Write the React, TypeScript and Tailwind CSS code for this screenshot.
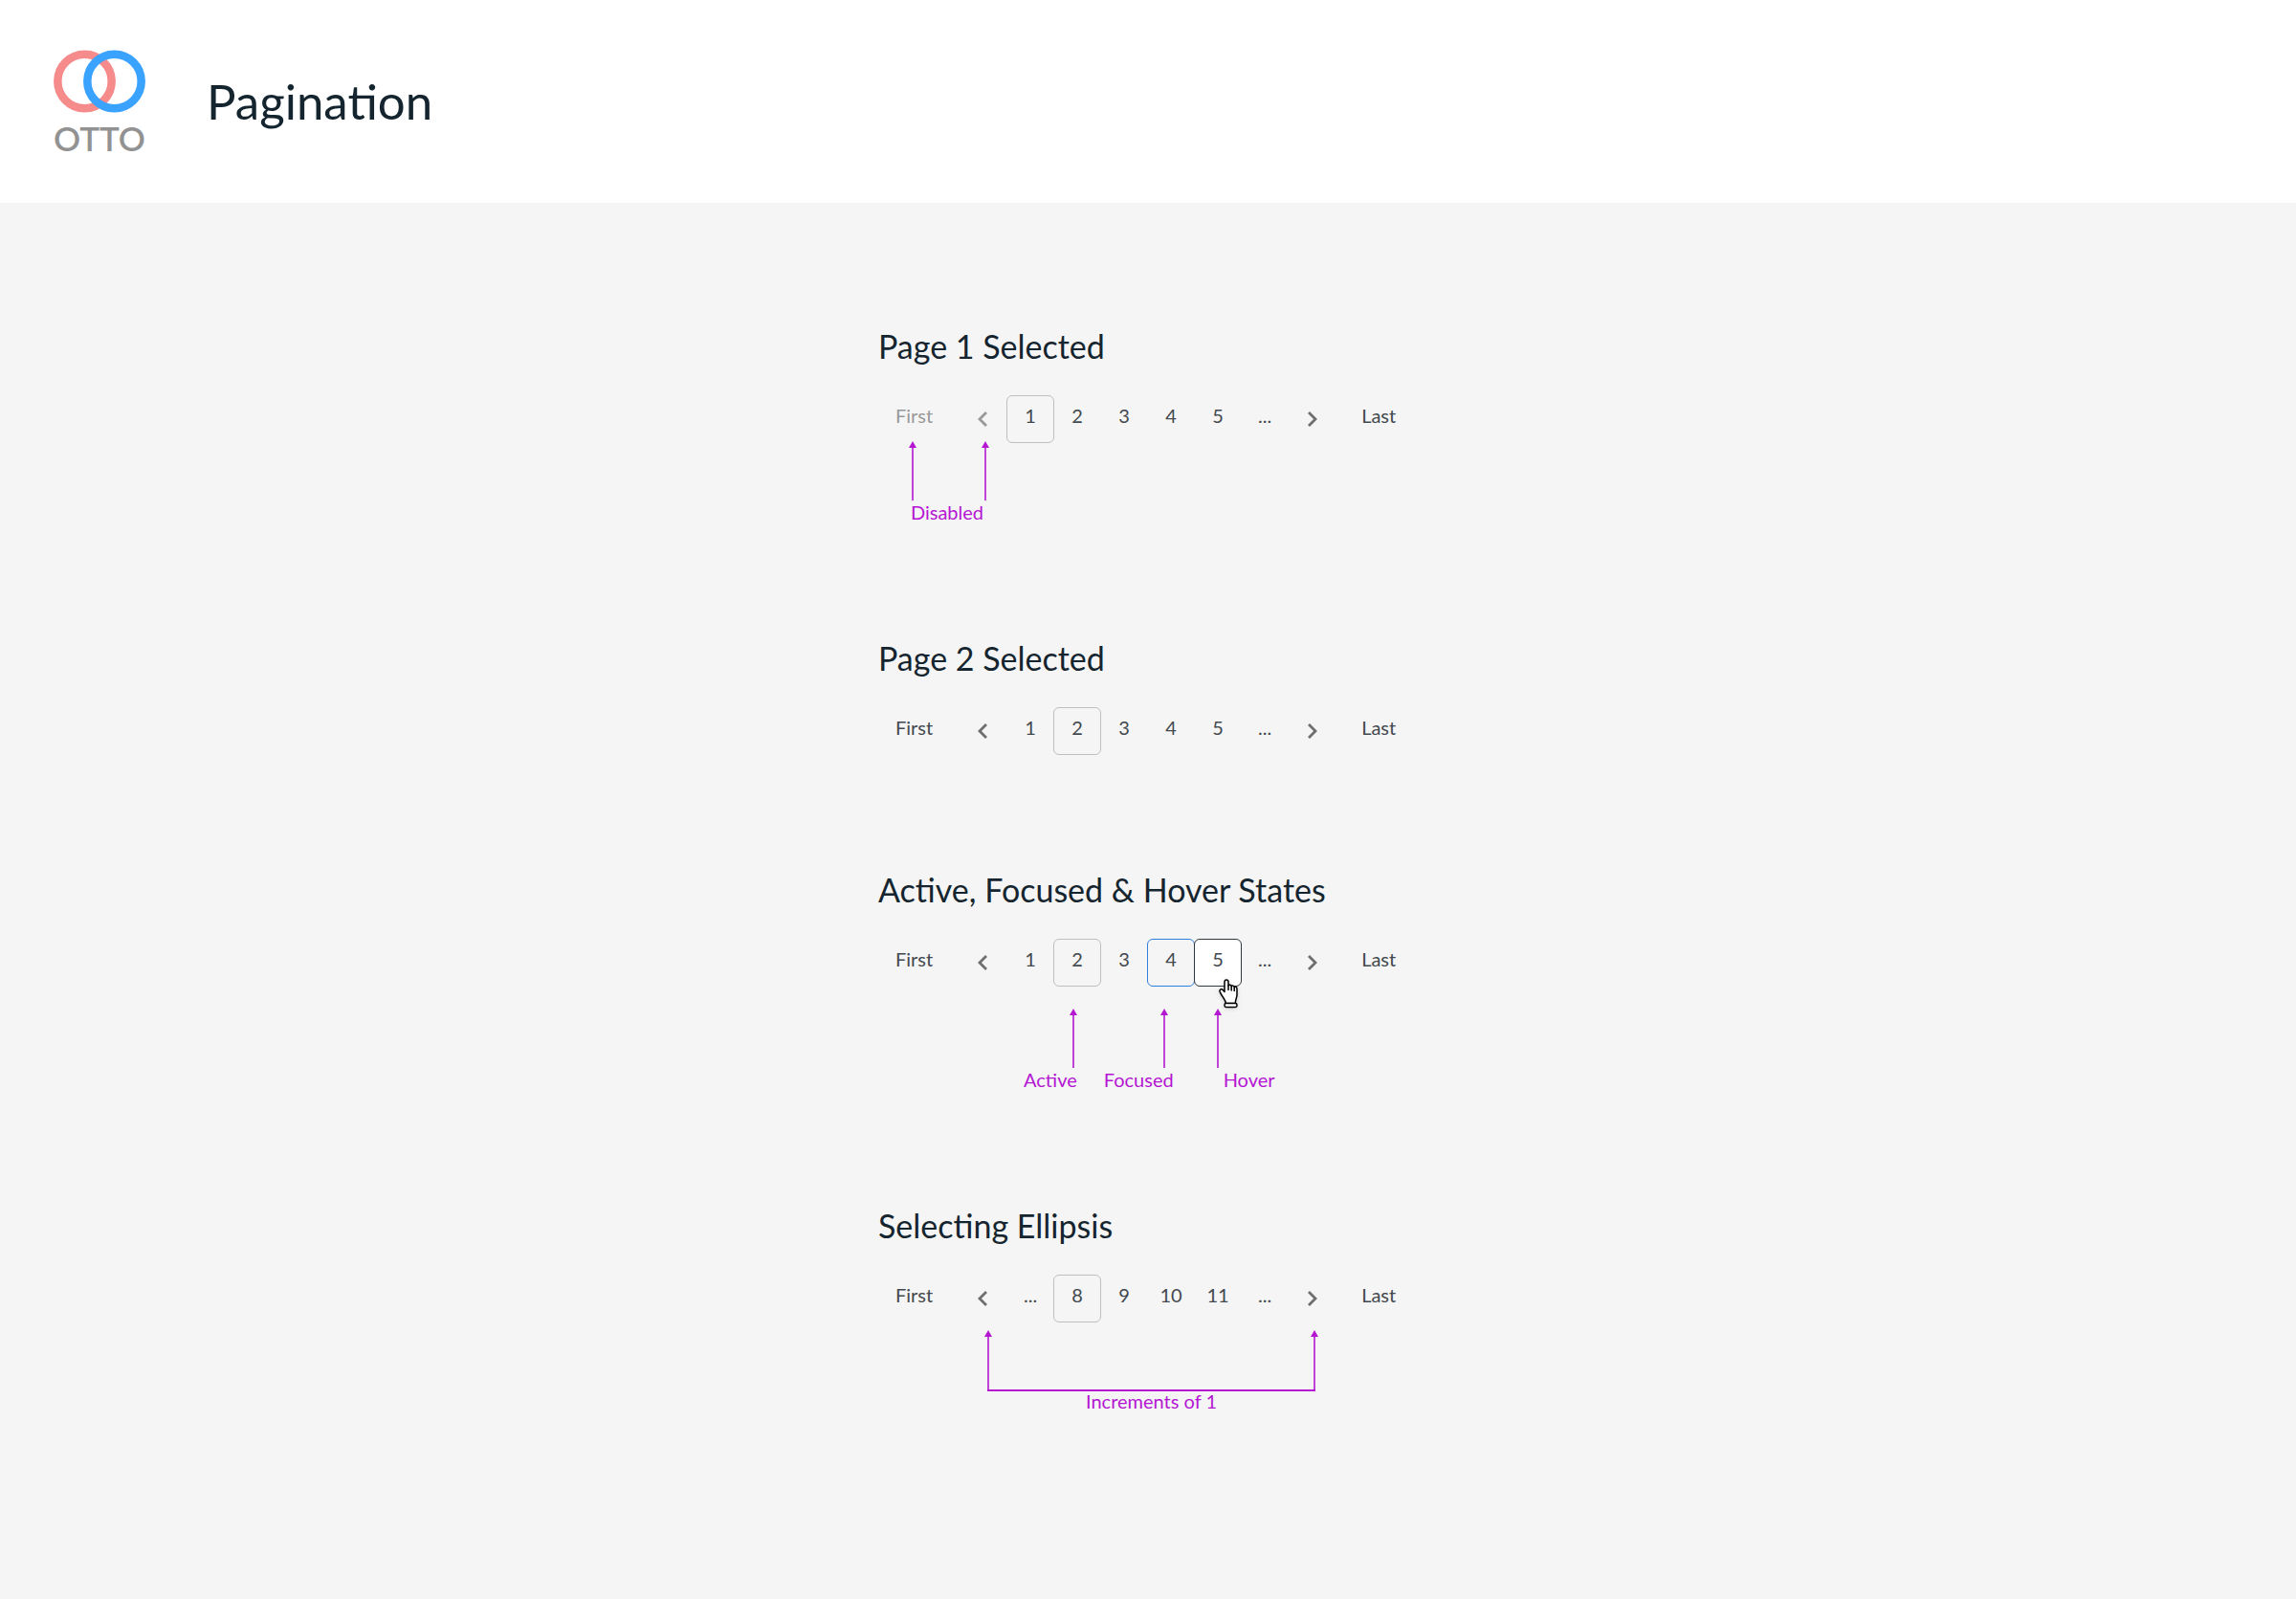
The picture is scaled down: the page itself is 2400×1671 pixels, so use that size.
import React from 'react';
import { clsx } from 'clsx';

type PageState = 'default' | 'active' | 'focused' | 'hover';

interface PageItem {
  label: string;
  state?: PageState;
}

interface PaginationProps {
  label: string;
  pages: PageItem[];
  atStart?: boolean;
}

interface SectionProps {
  title: string;
  className?: string;
  children: React.ReactNode;
}

const stateClasses: Record<PageState, string> = {
  default: 'border-transparent',
  active: 'border-[#bfbfbf]',
  focused: 'border-[#2f80dd]',
  hover: 'z-10 border-[#30383e] bg-white',
};

const Logo: React.FC = () => (
  <div className="flex w-24 flex-col items-center pt-1">
    <svg className="w-full" viewBox="0 0 96 66" fill="none" strokeWidth="8.5" aria-hidden="true">
      <circle cx="32.5" cy="33" r="28.2" stroke="#f58b8b" />
      <circle cx="63.5" cy="33" r="28.2" stroke="#3aa2ff" />
    </svg>
    <span className="mt-1.5 text-[35px] leading-10 font-semibold text-[#929292]">OTTO</span>
  </div>
);

const Chevron: React.FC<{ direction: 'left' | 'right' }> = ({ direction }) => (
  <svg className="h-4 w-2.5" viewBox="0 0 10 16" fill="none" stroke="currentColor" strokeWidth="2.8" aria-hidden="true">
    <path d={direction === 'left' ? 'M9 1L2 8l7 7' : 'M1 1l7 7-7 7'} />
  </svg>
);

const HandCursor: React.FC = () => (
  <svg
    className="pointer-events-none absolute top-10 left-6 h-8 w-[22px] drop-shadow-sm"
    viewBox="0 0 22 32"
    fill="#fff"
    stroke="#000"
    strokeWidth="1.5"
    strokeLinejoin="round"
    strokeLinecap="round"
    aria-hidden="true"
  >
    <path d="M7 14.5V4.2C7 1.3 11 1.3 11 4.2V8C11.6 6.9 14 7.1 14.2 8.6C15 7.6 17 8 17.2 9.5C18.2 8.8 20 9.4 20 11.2V17.5C20 21 18.3 22.3 18.3 26.5H8.3C8.3 22.5 4.5 20 2.2 14.6C1.2 12 4 10.8 5.3 12.6Z" />
    <path d="M11 8v4.5M14.2 9v4M17.2 10v3.5" />
    <rect x="7" y="26.6" width="13" height="3.8" rx="1.6" />
  </svg>
);

const Arrow: React.FC<{ className?: string }> = ({ className }) => (
  <svg className={clsx('h-[62px] w-2', className)} viewBox="0 0 8 62" fill="#b416d2" aria-hidden="true">
    <path d="M4 0l4 7H0z" />
    <path d="M3.2 6h1.6v56H3.2z" />
  </svg>
);

const Pagination: React.FC<PaginationProps> = ({ label, pages, atStart = false }) => (
  <nav aria-label={label} className="flex text-[20px] leading-6 text-[#43494f]">
    <button type="button" disabled={atStart} className="mr-2.5 px-[18px] pb-2 disabled:text-[#999]">
      First
    </button>
    <button
      type="button"
      aria-label="Previous page"
      disabled={atStart}
      className="flex h-[50px] w-[50px] items-center justify-center pr-0.5 text-[#6e6e6e] disabled:text-[#999]"
    >
      <Chevron direction="left" />
    </button>
    {pages.map(({ label: page, state = 'default' }, index) => (
      <button
        key={index}
        type="button"
        aria-current={state === 'active' ? 'page' : undefined}
        className={clsx('relative -ml-px size-[50px] rounded-md border pb-2', stateClasses[state])}
      >
        {page}
        {state === 'hover' && <HandCursor />}
      </button>
    ))}
    <button type="button" aria-label="Next page" className="flex size-[50px] items-center justify-center text-[#6e6e6e]">
      <Chevron direction="right" />
    </button>
    <button type="button" className="ml-2 px-[18px] pb-2">
      Last
    </button>
  </nav>
);

const Section: React.FC<SectionProps> = ({ title, className, children }) => (
  <section className={className}>
    <h2 className="mb-[26px] text-[34px] leading-[50px] text-[#15252f]">{title}</h2>
    {children}
  </section>
);

export default function App() {
  return (
    <div className="min-h-screen bg-[#f5f5f5] font-['Lato',sans-serif]">
      <header className="flex h-[212px] items-center gap-16 bg-white px-14">
        <Logo />
        <h1 className="text-[51px] leading-[60px] text-[#15252f]">Pagination</h1>
      </header>

      <main className="mx-auto flex w-[564px] flex-col pt-[125px] pb-40">
        <Section title="Page 1 Selected">
          <Pagination
            label="Page 1 selected"
            atStart
            pages={[
              { label: '1', state: 'active' },
              { label: '2' },
              { label: '3' },
              { label: '4' },
              { label: '5' },
              { label: '...' },
            ]}
          />
          <div className="-mt-0.5 ml-8 flex w-[84px] flex-col text-[20px] leading-6 text-[#b416d2]">
            <div className="flex justify-between">
              <Arrow />
              <Arrow />
            </div>
            <span className="pr-1 text-center">Disabled</span>
          </div>
        </Section>

        <Section title="Page 2 Selected" className="mt-[116px]">
          <Pagination
            label="Page 2 selected"
            pages={[
              { label: '1' },
              { label: '2', state: 'active' },
              { label: '3' },
              { label: '4' },
              { label: '5' },
              { label: '...' },
            ]}
          />
        </Section>

        <Section title="Active, Focused & Hover States" className="mt-[116px]">
          <Pagination
            label="Active, focused and hover states"
            pages={[
              { label: '1' },
              { label: '2', state: 'active' },
              { label: '3' },
              { label: '4', state: 'focused' },
              { label: '5', state: 'hover' },
              { label: '...' },
            ]}
          />
          <div className="mt-[23px] ml-[152px] flex text-[20px] leading-6 text-[#b416d2]">
            <div className="flex flex-col items-end">
              <Arrow />
              <span>Active</span>
            </div>
            <div className="ml-7 flex flex-col items-end">
              <Arrow className="mr-1.5" />
              <span>Focused</span>
            </div>
            <div className="ml-[42px] flex flex-col items-start">
              <Arrow />
              <span className="ml-2.5">Hover</span>
            </div>
          </div>
        </Section>

        <Section title="Selecting Ellipsis" className="mt-[116px]">
          <Pagination
            label="Selecting ellipsis"
            pages={[
              { label: '...' },
              { label: '8', state: 'active' },
              { label: '9' },
              { label: '10' },
              { label: '11' },
              { label: '...' },
            ]}
          />
          <div className="mt-2 ml-[111px] flex w-[349px] flex-col text-[20px] leading-5 text-[#b416d2]">
            <div className="flex justify-between">
              <Arrow />
              <Arrow />
            </div>
            <span className="mx-[3px] border-t-2 border-[#b416d2] text-center">Increments of 1</span>
          </div>
        </Section>
      </main>
    </div>
  );
}
